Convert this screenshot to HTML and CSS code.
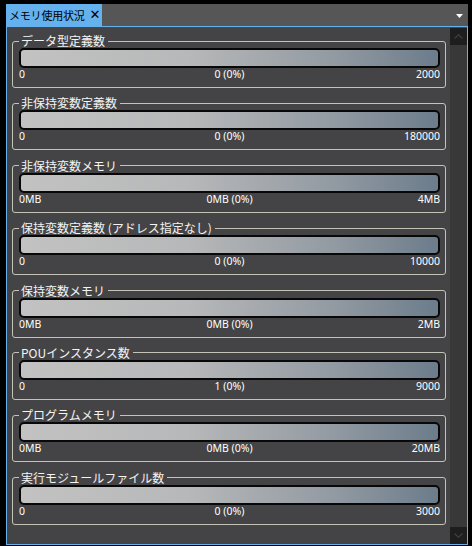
FILE: index.html
```html
<!DOCTYPE html>
<html>
<head>
    <title>メモリ使用状況</title>
    <link rel="stylesheet" href="styles.css">
</head>
<body>
    <div class="tabbar">
        <div class="tab">
            <span class="tab-title">メモリ使用状況</span>
            <span class="tab-close">&#x2715;</span>
        </div>
        <div class="tab-rest">
            <svg class="tab-menu" width="7" height="5" viewBox="0 0 7 5">
                <polygon points="0,0 7,0 3.5,4" fill="#ffffff"/>
            </svg>
        </div>
    </div>

    <div class="panel">
        <div class="panel-inner">
            <div class="content">
                <fieldset class="group">
                    <legend>データ型定義数</legend>
                    <div class="bar"></div>
                    <div class="scale"><span>0</span><span>0 (0%)</span><span class="max">2000</span></div>
                </fieldset>
                <fieldset class="group">
                    <legend>非保持変数定義数</legend>
                    <div class="bar"></div>
                    <div class="scale"><span>0</span><span>0 (0%)</span><span class="max">180000</span></div>
                </fieldset>
                <fieldset class="group">
                    <legend>非保持変数メモリ</legend>
                    <div class="bar"></div>
                    <div class="scale"><span>0MB</span><span>0MB (0%)</span><span class="max">4MB</span></div>
                </fieldset>
                <fieldset class="group">
                    <legend>保持変数定義数 (アドレス指定なし)</legend>
                    <div class="bar"></div>
                    <div class="scale"><span>0</span><span>0 (0%)</span><span class="max">10000</span></div>
                </fieldset>
                <fieldset class="group">
                    <legend>保持変数メモリ</legend>
                    <div class="bar"></div>
                    <div class="scale"><span>0MB</span><span>0MB (0%)</span><span class="max">2MB</span></div>
                </fieldset>
                <fieldset class="group">
                    <legend>POUインスタンス数</legend>
                    <div class="bar"></div>
                    <div class="scale"><span>0</span><span>1 (0%)</span><span class="max">9000</span></div>
                </fieldset>
                <fieldset class="group">
                    <legend>プログラムメモリ</legend>
                    <div class="bar"></div>
                    <div class="scale"><span>0MB</span><span>0MB (0%)</span><span class="max">20MB</span></div>
                </fieldset>
                <fieldset class="group">
                    <legend>実行モジュールファイル数</legend>
                    <div class="bar"></div>
                    <div class="scale"><span>0</span><span>0 (0%)</span><span class="max">3000</span></div>
                </fieldset>
            </div>

            <div class="scrollbar">
                <div class="scroll-btn">
                    <svg width="9" height="5" viewBox="0 0 9 5"><polyline points="0.5,4.5 4.5,0.8 8.5,4.5" fill="none" stroke="#3c3c3c" stroke-width="1.4"/></svg>
                </div>
                <div class="scroll-track"></div>
                <div class="scroll-btn">
                    <svg width="9" height="5" viewBox="0 0 9 5"><polyline points="0.5,0.5 4.5,4.2 8.5,0.5" fill="none" stroke="#3c3c3c" stroke-width="1.4"/></svg>
                </div>
            </div>
        </div>
    </div>
</body>
</html>
```

FILE: styles.css
```css
body {
    margin: 0;
    padding: 4px 4px 1px 6px;
    background-color: #000000;
    font-family: "Noto Sans CJK JP", "Noto Sans", sans-serif;
    font-size: 12px;
    color: #f2f2f2;
}
.tabbar {
    display: flex;
    height: 22px;
}
.tab {
    width: 96px;
    flex-shrink: 0;
    display: flex;
    align-items: center;
    padding-left: 3px;
    box-sizing: border-box;
    background-color: #64b1ed;
    color: #000000;
    white-space: nowrap;
}
.tab-title {
    font-size: 11px;
    line-height: 14px;
    letter-spacing: -0.2px;
}
.tab-close {
    margin-left: 5px;
    font-size: 13px;
    line-height: 14px;
    font-weight: bold;
    font-family: "DejaVu Sans", sans-serif;
}
.tab-rest {
    flex: 1;
    display: flex;
    justify-content: flex-end;
    align-items: center;
    padding-right: 5px;
    padding-top: 2px;
    background-color: #565656;
}
.panel {
    height: 519px;
    box-sizing: border-box;
    border: 1px solid #64b1ed;
}
.panel-inner {
    display: flex;
    height: 100%;
    border-top: 1px solid #54443f;
    box-sizing: border-box;
}
.content {
    flex: 1;
    display: flex;
    flex-direction: column;
    gap: 8.4px;
    padding: 6px 4px 0 5px;
    background-color: #444446;
}
.group {
    margin: 0;
    padding: 0 5px 7px 6px;
    border: 1px solid #c4c4b8;
    border-radius: 3px;
    height: 54px;
    box-sizing: border-box;
}
.group legend {
    padding: 0 3px 0 2px;
    font-size: 12px;
    line-height: 14px;
    color: #f4f4f4;
}
.bar {
    height: 20px;
    box-sizing: border-box;
    border: 2px solid #080808;
    border-radius: 5px;
    background: linear-gradient(to right, #c2c2c2, #b7b8b9 40%, #929aa2 75%, #6c7c8b);
}
.scale {
    display: grid;
    grid-template-columns: 1fr auto 1fr;
    font-family: "Noto Sans", sans-serif;
    font-size: 10.5px;
    line-height: 13px;
    color: #ffffff;
}
.scale .max {
    text-align: right;
}
.scrollbar {
    width: 17px;
    display: flex;
    flex-direction: column;
    background-color: #383838;
}
.scroll-btn {
    height: 17px;
    display: flex;
    align-items: center;
    justify-content: center;
    background-color: #1e1e1e;
}
.scroll-track {
    flex: 1;
}
```
